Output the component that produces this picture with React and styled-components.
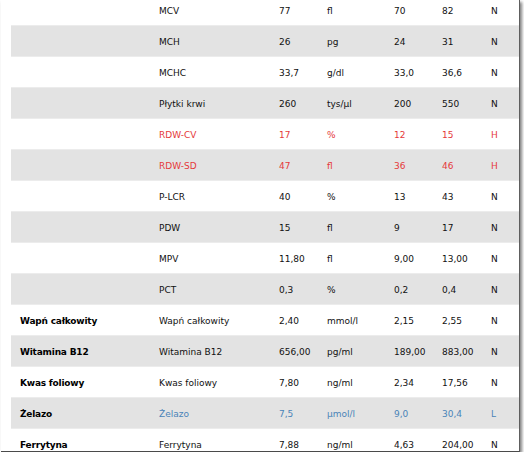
import React from 'react'
import styled, { createGlobalStyle } from 'styled-components'

const Global = createGlobalStyle`
  html, body {
    margin: 0;
    padding: 0;
    background: #ffffff;
  }
`

const Frame = styled.div`
  margin-left: 1px;
  width: 518px;
  height: 451px;
  overflow: hidden;
  background: #ffffff;
  border-right: 1px solid #5e5e5e;
  border-bottom: 1px solid #4a4a4a;
  box-shadow: 2px 2px 3px rgba(0, 0, 0, 0.5);
`

const Table = styled.div`
  margin-top: -5px;
  margin-left: 10px;
  display: flex;
  flex-direction: column;
`

const colors = {
  normal: '#111111',
  high: '#e5393a',
  low: '#4a84b8',
}

const Row = styled.div`
  display: grid;
  grid-template-columns: 139px 120px 48px 67px 48px 49px 1fr;
  align-items: center;
  box-sizing: border-box;
  height: 31px;
  padding: 2px 0 0 9px;
  border-bottom: 1px solid #ececec;
  background: ${p => (p.$shade ? '#e3e3e3' : '#ffffff')};
  font-family: "DejaVu Sans", Verdana, sans-serif;
  font-size: 9px;
  color: ${p => colors[p.$tone]};
`

const Group = styled.span`
  font-weight: bold;
  color: #000000;
  letter-spacing: -0.2px;
`

const Cell = styled.span`
  white-space: nowrap;
`

const rows = [
  ['', 'MCV', '77', 'fl', '70', '82', 'N'],
  ['', 'MCH', '26', 'pg', '24', '31', 'N'],
  ['', 'MCHC', '33,7', 'g/dl', '33,0', '36,6', 'N'],
  ['', 'Płytki krwi', '260', 'tys/µl', '200', '550', 'N'],
  ['', 'RDW-CV', '17', '%', '12', '15', 'H'],
  ['', 'RDW-SD', '47', 'fl', '36', '46', 'H'],
  ['', 'P-LCR', '40', '%', '13', '43', 'N'],
  ['', 'PDW', '15', 'fl', '9', '17', 'N'],
  ['', 'MPV', '11,80', 'fl', '9,00', '13,00', 'N'],
  ['', 'PCT', '0,3', '%', '0,2', '0,4', 'N'],
  ['Wapń całkowity', 'Wapń całkowity', '2,40', 'mmol/l', '2,15', '2,55', 'N'],
  ['Witamina B12', 'Witamina B12', '656,00', 'pg/ml', '189,00', '883,00', 'N'],
  ['Kwas foliowy', 'Kwas foliowy', '7,80', 'ng/ml', '2,34', '17,56', 'N'],
  ['Żelazo', 'Żelazo', '7,5', 'µmol/l', '9,0', '30,4', 'L'],
  ['Ferrytyna', 'Ferrytyna', '7,88', 'ng/ml', '4,63', '204,00', 'N'],
]

const toneOf = flag => (flag === 'H' ? 'high' : flag === 'L' ? 'low' : 'normal')

export default function App() {
  return (
    <>
      <Global />
      <Frame>
        <Table>
          {rows.map(([group, ...rest], i) => (
            <Row key={i} $shade={i % 2 === 1} $tone={toneOf(rest[5])}>
              <Group>{group}</Group>
              {rest.map((v, j) => (
                <Cell key={j}>{v}</Cell>
              ))}
            </Row>
          ))}
        </Table>
      </Frame>
    </>
  )
}
